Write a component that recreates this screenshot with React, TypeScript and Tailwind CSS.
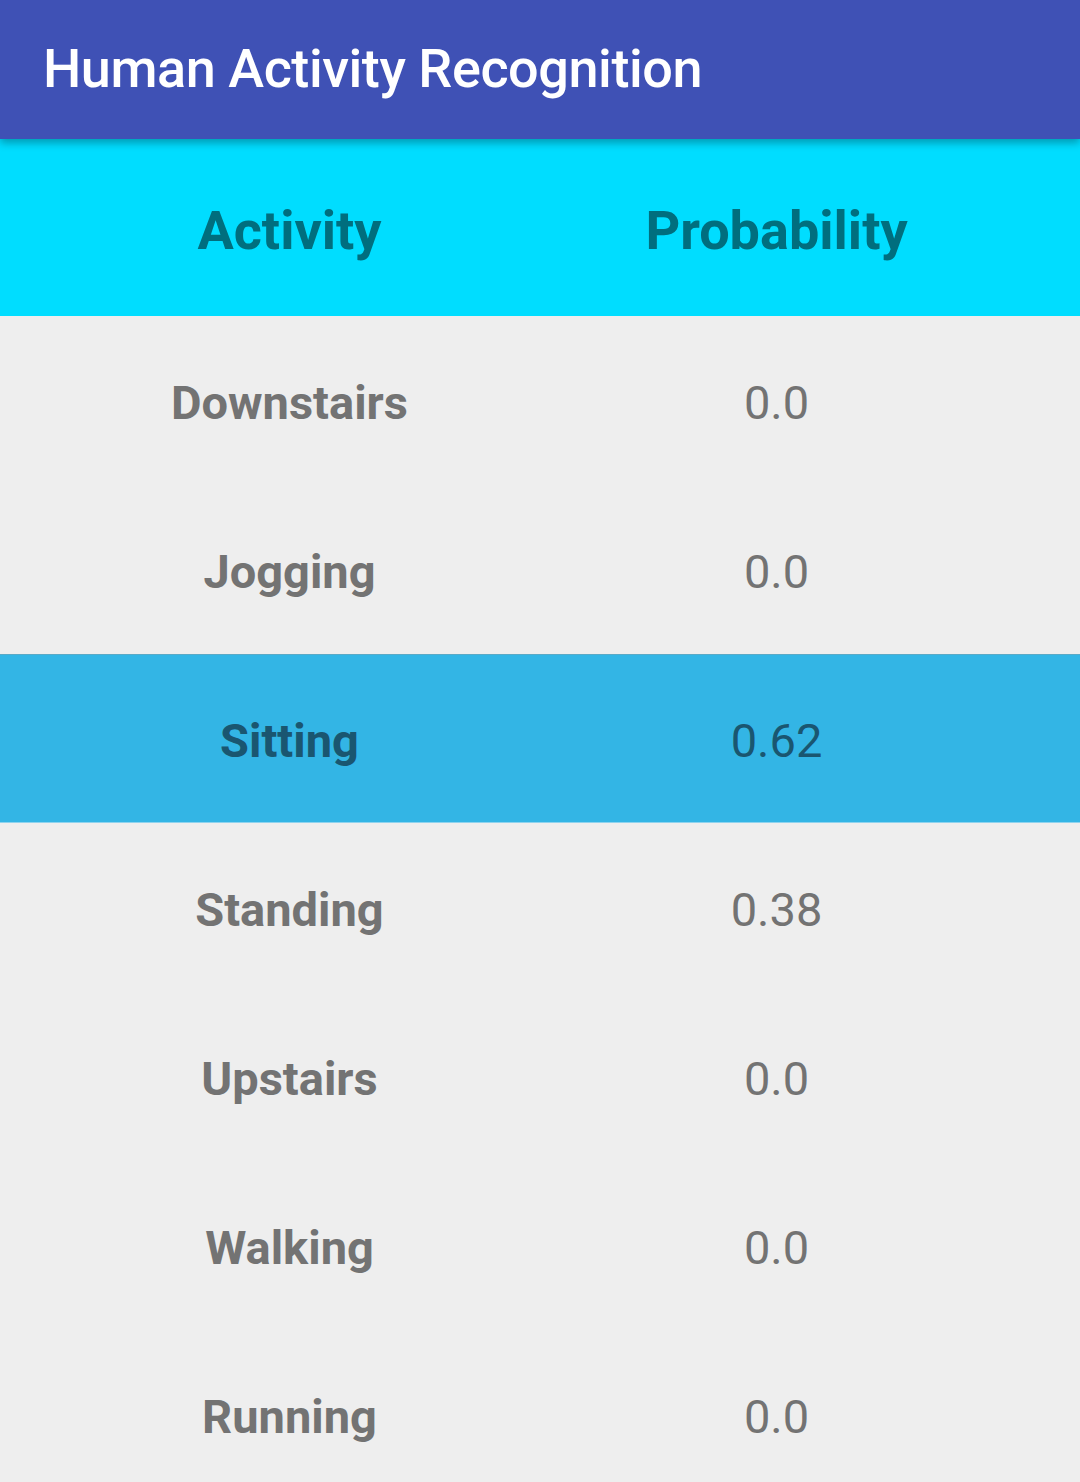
import React from "react";

const rows = [
  { activity: "Downstairs", prob: "0.0" },
  { activity: "Jogging", prob: "0.0" },
  { activity: "Sitting", prob: "0.62", active: true },
  { activity: "Standing", prob: "0.38" },
  { activity: "Upstairs", prob: "0.0" },
  { activity: "Walking", prob: "0.0" },
  { activity: "Running", prob: "0.0" },
];

export default function App() {
  return (
    <div className="w-[1080px] h-[1482px] overflow-hidden bg-[#eeeeee] font-['Roboto',sans-serif]">
      {/* app bar */}
      <div className="relative z-10 h-[139px] bg-[#3f51b5] flex items-center pl-[43px] shadow-[0_4px_8px_rgba(0,0,0,0.3)]">
        <h1 className="text-white text-[54px] font-medium leading-none tracking-[-0.45px] pb-[2px]">
          Human Activity Recognition
        </h1>
      </div>

      {/* table header */}
      <div className="grid grid-cols-2 h-[177px] items-center bg-[#00ddff] pl-[46px] pr-[60px]">
        <div className="text-center text-[54px] font-bold text-[#006e7e] leading-none pt-[6px]">Activity</div>
        <div className="text-center text-[54px] font-bold text-[#006e7e] leading-none pt-[6px]">Probability</div>
      </div>

      {rows.map((r) => (
        <div
          key={r.activity}
          className={
            r.active
              ? "grid grid-cols-2 h-[169px] items-center bg-[#33b5e5] border-t border-t-[#5aa9c6] border-b border-b-[#8fd3ee] pl-[46px] pr-[60px]"
              : "grid grid-cols-2 h-[169px] items-center pl-[46px] pr-[60px]"
          }
        >
          <div
            className={
              r.active
                ? "text-center text-[47px] font-bold text-[#1a5670] leading-none pt-[4px]"
                : "text-center text-[47px] font-bold text-[#737373] leading-none pt-[4px]"
            }
          >
            {r.activity}
          </div>
          <div
            className={
              r.active
                ? "text-center text-[47px] text-[#1a5670] leading-none pt-[4px]"
                : "text-center text-[47px] text-[#737373] leading-none pt-[4px]"
            }
          >
            {r.prob}
          </div>
        </div>
      ))}
    </div>
  );
}
